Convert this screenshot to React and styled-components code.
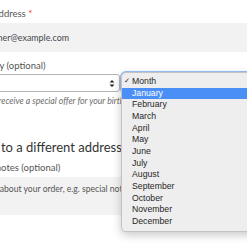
import React from "react";
import styled, { createGlobalStyle } from "styled-components";

const GlobalStyle = createGlobalStyle`
  html, body {
    margin: 0;
    padding: 0;
    background: #ffffff;
    overflow: hidden;
  }
`;

const Page = styled.div`
  position: relative;
  width: 247px;
  height: 247px;
  overflow: hidden;
  background: #fff;
`;

const Form = styled.div`
  width: 330px;
  margin-left: -31px;
  padding-top: 8px;
  font-family: Lato, "Open Sans", sans-serif;
  color: #43454b;
`;

const Label = styled.div`
  font-size: 9.5px;
  line-height: 12px;
  color: #555;
  margin-bottom: ${(p) => p.gap || 3}px;
`;

const Required = styled.span`
  color: #e2401c;
`;

const TextInput = styled.div`
  height: 29px;
  display: flex;
  align-items: center;
  padding: 0 5px;
  background: #f2f2f2;
  font-size: 8.9px;
  color: #43454b;
  margin-bottom: 8px;
`;

const SelectRow = styled.div`
  display: flex;
  gap: 3px;
  margin-top: 2px;
`;

const Select = styled.div`
  width: ${(p) => p.w}px;
  height: 18px;
  box-sizing: border-box;
  border: 1px solid #b5b5b5;
  border-radius: 3px;
  background: #fff;
  display: flex;
  align-items: center;
  justify-content: space-between;
  padding: 0 4px 0 6px;
  font-size: 9px;
  box-shadow: ${(p) => (p.focused ? "0 0 0 3px rgba(70, 140, 240, 0.55)" : "none")};
`;

const Arrows = styled.svg`
  width: 6px;
  height: 9px;
`;

const Help = styled.div`
  font-size: 8.7px;
  font-style: italic;
  color: #6d6d6d;
  line-height: 12px;
  margin-top: 3px;
`;

const Heading = styled.div`
  font-size: 13px;
  font-weight: 400;
  color: #333;
  line-height: 18px;
  margin: 31px 0 6px 4px;
`;

const TextArea = styled.div`
  height: 38px;
  box-sizing: border-box;
  padding: 6px 6px;
  background: #f2f2f2;
  font-size: 8.6px;
  color: #555;
  line-height: 12px;
`;

const Menu = styled.div`
  position: absolute;
  left: 121px;
  top: 72px;
  width: 140px;
  padding: 3px 0;
  background: #eeeeee;
  border: 0.5px solid rgba(0, 0, 0, 0.18);
  border-radius: 5px;
  box-shadow: 0 3px 10px rgba(0, 0, 0, 0.22);
  font-family: "Liberation Sans", Arial, sans-serif;
  font-size: 8.7px;
`;

const Item = styled.div`
  position: relative;
  height: 11.67px;
  line-height: 11.67px;
  padding-left: 10px;
  color: ${(p) => (p.active ? "#fff" : "#262626")};
  background: ${(p) => (p.active ? "#4a8ff5" : "transparent")};
`;

const Check = styled.span`
  position: absolute;
  left: 2px;
  font-family: "DejaVu Sans", sans-serif;
  font-size: 7px;
`;

const months = [
  "January", "February", "March", "April", "May", "June",
  "July", "August", "September", "October", "November", "December",
];

const App = () => {
  return (
    <Page>
      <GlobalStyle />
      <Form>
        <Label>Email address <Required>*</Required></Label>
        <TextInput>customer@example.com</TextInput>

        <Label gap={2}>Birthday (optional)</Label>
        <SelectRow>
          <Select w={151}>
            <span>Day</span>
            <Arrows viewBox="0 0 6 9">
              <path d="M0.5 3.5 L3 1 L5.5 3.5 Z M0.5 5.5 L3 8 L5.5 5.5 Z" fill="#222" />
            </Arrows>
          </Select>
          <Select w={150} focused>
            <span>Month</span>
          </Select>
        </SelectRow>
        <Help>You will receive a special offer for your birthday</Help>

        <Heading>Ship to a different address?</Heading>
        <Label gap={3}>Order notes (optional)</Label>
        <TextArea>Notes about your order, e.g. special notes for delivery.</TextArea>
      </Form>

      <Menu>
        <Item><Check>✓</Check>Month</Item>
        {months.map((m, i) => (
          <Item key={m} active={i === 0}>{m}</Item>
        ))}
      </Menu>
    </Page>
  );
};

export default App;
